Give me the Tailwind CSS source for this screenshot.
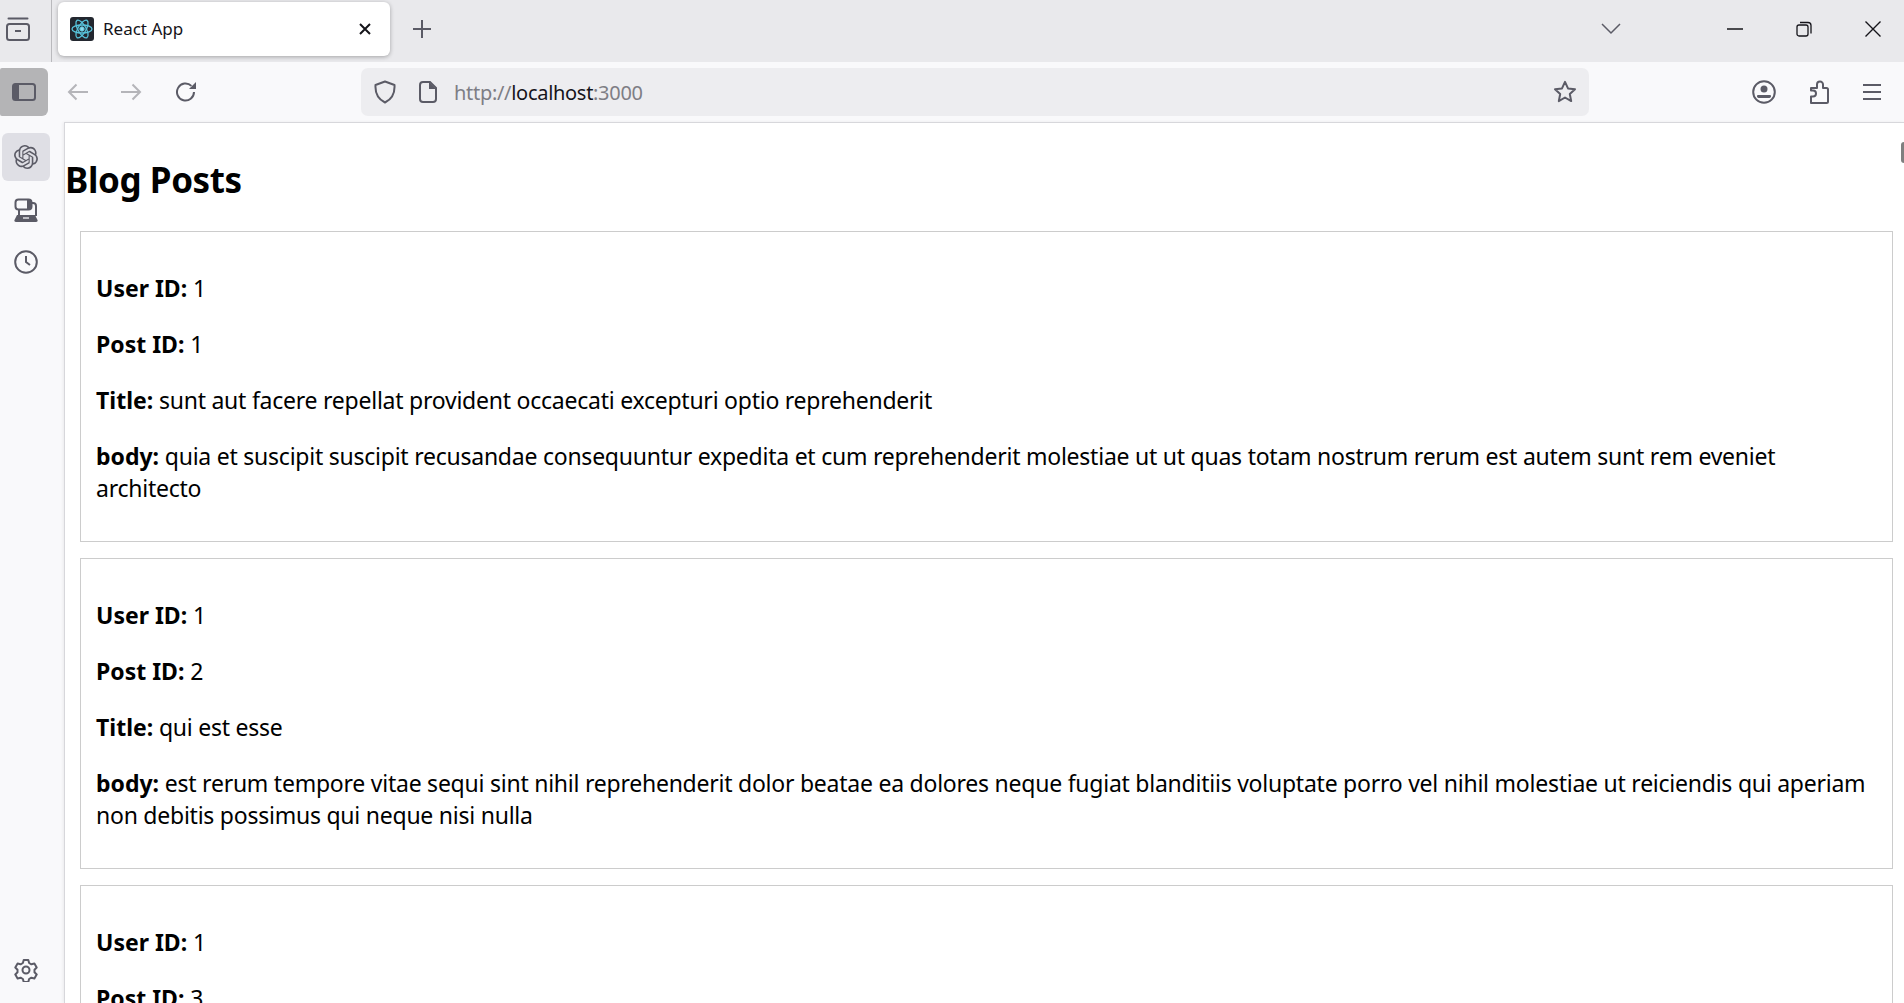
<!DOCTYPE html>
<html lang="en">
<head>
<meta charset="utf-8">
<title>React App</title>
<script src="https://cdn.jsdelivr.net/npm/@tailwindcss/browser@4"></script>
</head>
<body class="h-screen overflow-hidden bg-[#f9f9fb] font-['Noto_Sans','Open_Sans',sans-serif] text-black">
<div class="flex h-screen flex-col">
  <!-- tab strip -->
  <div class="flex h-[62px] shrink-0 bg-[#e9e9ec]">
    <div class="flex h-full w-[52px] items-center border-r border-[#b9b9bd] pb-[4px] pl-[6px]">
      <svg width="24" height="24" viewBox="0 0 24 24" fill="none" stroke="#5b5b66" stroke-width="2"><path d="M2.500 1.500h19" stroke-linecap="round"/><rect x="1" y="7" width="22" height="16" rx="2.500"/><path d="M9 14h6"/></svg>
    </div>
    <div class="flex h-full flex-1 items-center pb-[4px]">
      <div class="ml-[6px] flex h-[54px] w-[332px] items-center rounded-[6px] bg-white pl-[12px] pr-[18px] shadow-[0_1px_4px_rgba(0,0,0,0.3)]">
        <svg width="24" height="24" viewBox="0 0 24 24" fill="none" stroke="#58c4dc" stroke-width="1.300"><rect width="24" height="24" rx="3" fill="#23272f" stroke="none"/><circle cx="12" cy="12" r="2.200" fill="#8fdcec" stroke="#58c4dc" stroke-width="1"/><ellipse cx="12" cy="12" rx="10" ry="4"/><ellipse cx="12" cy="12" rx="10" ry="4" transform="rotate(60 12 12)"/><ellipse cx="12" cy="12" rx="10" ry="4" transform="rotate(120 12 12)"/></svg>
        <span class="ml-[9px] flex-1 text-[17px] text-[#15141a]">React App</span>
        <svg width="14" height="14" viewBox="0 0 14 14" fill="none" stroke="#15141a" stroke-width="2"><path d="M2 2l10 10M12 2L2 12"/></svg>
      </div>
      <div class="flex w-[64px] justify-center">
        <svg width="18" height="18" viewBox="0 0 18 18" fill="none" stroke="#5b5b66" stroke-width="2"><path d="M9 0v18M0 9h18"/></svg>
      </div>
      <div class="flex-1"></div>
      <svg class="mr-[106px]" width="20" height="12" viewBox="0 0 20 12" fill="none" stroke="#5b5b66" stroke-width="1.500"><path d="M1 1l9 9 9-9"/></svg>
      <svg class="mr-[53px]" width="16" height="2" viewBox="0 0 16 2"><path d="M0 1h16" stroke="#15141a" stroke-width="1.500"/></svg>
      <svg class="mr-[53px]" width="16" height="16" viewBox="0 0 16 16" fill="none" stroke="#15141a" stroke-width="1.300"><rect x="1" y="4" width="11" height="11" rx="2"/><path d="M4 1.500h8a3 3 0 0 1 3 3v8"/></svg>
      <svg class="mr-[23px]" width="16" height="16" viewBox="0 0 16 16" fill="none" stroke="#15141a" stroke-width="1.400"><path d="M0.500 0.500l15 15M15.500 0.500l-15 15"/></svg>
    </div>
  </div>
  <!-- toolbar -->
  <div class="flex h-[60px] shrink-0 items-center">
    <div class="flex h-[48px] w-[48px] items-center justify-center rounded-r-[6px] rounded-l-[2px] bg-[#b4b4b6]">
      <svg width="24" height="18" viewBox="0 0 24 18" fill="none"><rect x="1" y="1" width="22" height="16" rx="2.500" stroke="#5b5b66" stroke-width="2"/><path d="M2 2h5v14H2z" fill="#5b5b66"/></svg>
    </div>
    <div class="flex w-[54px] justify-center pl-[6px]">
      <svg width="22" height="18" viewBox="0 0 22 18" fill="none" stroke="#b5b5b9" stroke-width="2"><path d="M21 9H2M9.500 1.500L2 9l7.500 7.500"/></svg>
    </div>
    <div class="flex w-[58px] justify-center">
      <svg width="22" height="18" viewBox="0 0 22 18" fill="none" stroke="#b5b5b9" stroke-width="2"><path d="M1 9h19M12.500 1.500L20 9l-7.500 7.500"/></svg>
    </div>
    <div class="flex w-[52px] justify-center">
      <svg width="22" height="22" viewBox="0 0 22 22" fill="none"><path d="M19 11a8.500 8.500 0 1 1-2.600-6.100" stroke="#5b5b66" stroke-width="2"/><path d="M21 1v7h-7z" fill="#5b5b66"/></svg>
    </div>
    <div class="ml-[149px] flex h-[48px] w-[1228px] items-center rounded-[7px] bg-[#ededf0] pl-[13px] pr-[13px]">
      <svg width="22" height="24" viewBox="0 0 22 24" fill="none" stroke="#5b5b66" stroke-width="2"><path d="M11 1.500l9.500 3.500c.5 8-2.500 14-9.500 17.500C4 19 1 13 1.500 5z" stroke-linejoin="round"/></svg>
      <svg class="ml-[23px]" width="18" height="22" viewBox="0 0 18 22" fill="none"><path d="M11 1H4a3 3 0 0 0-3 3v14a3 3 0 0 0 3 3h10a3 3 0 0 0 3-3V7z" stroke="#5b5b66" stroke-width="2"/><path d="M10 1l7 7h-7z" fill="#5b5b66"/></svg>
      <div class="ml-[17px] flex-1 pt-[1px] text-[20px] tracking-[-0.3px] text-[#7e7e85]">http://<span class="text-[#15141a]">localhost</span>:3000</div>
      <svg class="translate-x-[1px]" width="24" height="24" viewBox="0 0 24 24" fill="none" stroke="#5b5b66" stroke-width="2" stroke-linejoin="round"><path d="M12 1.800l3 6.600 7 .8-5.200 4.800 1.400 7.100L12 17.500l-6.200 3.600 1.400-7.100L2 9.200l7-.8z"/></svg>
    </div>
    <div class="ml-[163px] flex">
      <svg width="24" height="24" viewBox="0 0 24 24"><circle cx="12" cy="12" r="10.800" fill="none" stroke="#5b5b66" stroke-width="2"/><circle cx="12" cy="9" r="3.500" fill="#5b5b66"/><path d="M5.500 15h13a2 2 0 0 1-1 3H6.500a2 2 0 0 1-1-3z" fill="#5b5b66"/></svg>
      <svg class="ml-[33px]" width="20" height="24" viewBox="0 0 20 24" fill="none" stroke="#5b5b66" stroke-width="2" stroke-linejoin="round"><path d="M8 8V4.500a3 3 0 0 1 6 0V8h3.500A1.500 1.500 0 0 1 19 9.500v12a1.500 1.500 0 0 1-1.500 1.500H2v-6.500h2a3 3 0 0 0 0-6H2V8z"/></svg>
      <svg class="ml-[34px]" width="18" height="24" viewBox="0 0 18 24" fill="none" stroke="#5b5b66" stroke-width="2"><path d="M0 5h18M0 12h18M0 19h18"/></svg>
    </div>
  </div>
  <!-- sidebar + page -->
  <div class="flex min-h-0 flex-1">
    <aside class="flex w-[64px] shrink-0 flex-col items-center pr-[12px] pt-[11px] pb-[21px]">
      <div class="flex h-[48px] w-[48px] items-center justify-center rounded-[6px] bg-[#dfdfe5]">
        <svg width="24" height="24" viewBox="0 0 24 24" fill="#5b5b66"><path d="M22.2819 9.8211a5.9847 5.9847 0 0 0-.5157-4.9108 6.0462 6.0462 0 0 0-6.5098-2.9A6.0651 6.0651 0 0 0 4.9807 4.1818a5.9847 5.9847 0 0 0-3.9977 2.9 6.0462 6.0462 0 0 0 .7427 7.0966 5.98 5.98 0 0 0 .511 4.9107 6.051 6.051 0 0 0 6.5146 2.9001A5.9847 5.9847 0 0 0 13.2599 24a6.0557 6.0557 0 0 0 5.7718-4.2058 5.9894 5.9894 0 0 0 3.9977-2.9001 6.0557 6.0557 0 0 0-.7475-7.0729zm-9.022 12.6081a4.4755 4.4755 0 0 1-2.8764-1.0408l.1419-.0804 4.7783-2.7582a.7948.7948 0 0 0 .3927-.6813v-6.7369l2.02 1.1686a.071.071 0 0 1 .038.052v5.5826a4.504 4.504 0 0 1-4.4945 4.4944zm-9.6607-4.1254a4.4708 4.4708 0 0 1-.5346-3.0137l.142.0852 4.783 2.7582a.7712.7712 0 0 0 .7806 0l5.8428-3.3685v2.3324a.0804.0804 0 0 1-.0332.0615L9.74 19.9502a4.4992 4.4992 0 0 1-6.1408-1.6464zM2.3408 7.8956a4.485 4.485 0 0 1 2.3655-1.9728V11.6a.7664.7664 0 0 0 .3879.6765l5.8144 3.3543-2.0201 1.1685a.0757.0757 0 0 1-.071 0l-4.8303-2.7865A4.504 4.504 0 0 1 2.3408 7.872zm16.5963 3.8558L13.1038 8.364 15.1192 7.2a.0757.0757 0 0 1 .071 0l4.8303 2.7913a4.4944 4.4944 0 0 1-.6765 8.1042v-5.6772a.79.79 0 0 0-.407-.667zm2.0107-3.0231l-.142-.0852-4.7735-2.7818a.7759.7759 0 0 0-.7854 0L9.409 9.2297V6.8974a.0662.0662 0 0 1 .0284-.0615l4.8303-2.7866a4.4992 4.4992 0 0 1 6.6802 4.66zM8.3065 12.863l-2.02-1.1638a.0804.0804 0 0 1-.038-.0567V6.0742a4.4992 4.4992 0 0 1 7.3757-3.4537l-.142.0805L8.704 5.459a.7948.7948 0 0 0-.3927.6813zm1.0976-2.3654l2.602-1.4998 2.6069 1.4998v2.9994l-2.5974 1.4997-2.6067-1.4997Z"/></svg>
      </div>
      <svg class="mt-[17px]" width="24" height="24" viewBox="0 0 24 24" fill="none"><rect x="1.500" y="1.500" width="16" height="10" rx="3" stroke="#5b5b66" stroke-width="2"/><path d="M13 2h3.500a1 1 0 0 1 1 1v7a1 1 0 0 1-1 1H13z" fill="#5b5b66"/><path d="M17.500 5h1.500a3 3 0 0 1 3 3v10M5 11.500V18" stroke="#5b5b66" stroke-width="2"/><path d="M3 17h18l2.500 5a1.500 1.500 0 0 1-1.300 2H1.800a1.500 1.500 0 0 1-1.300-2z" fill="#5b5b66"/><path d="M9 20h6" stroke="#dfdfe5" stroke-width="1.500"/></svg>
      <svg class="mt-[28px]" width="24" height="24" viewBox="0 0 24 24" fill="none" stroke="#5b5b66" stroke-width="2"><circle cx="12" cy="12" r="10.800"/><path d="M12 6v6l4 3"/></svg>
      <div class="flex-1"></div>
      <svg width="24" height="24" viewBox="0 0 24 24" fill="none" stroke="#5b5b66" stroke-width="2" stroke-linejoin="round"><circle cx="12" cy="12" r="3.500"/><path d="M9.700 2h4.600l.8 3 2.300 1.300 3-.8 2.300 4-2.200 2.200v2.600l2.200 2.200-2.300 4-3-.8-2.300 1.300-.8 3H9.700l-.8-3-2.300-1.300-3 .8-2.300-4 2.200-2.200v-2.600L1.300 9.500l2.300-4 3 .8 2.300-1.300z"/></svg>
    </aside>
    <main class="relative min-w-0 flex-1 overflow-hidden border-l border-t border-[#d7d7db] bg-white shadow-[-1px_0_3px_rgba(0,0,0,0.06)]">
      <div class="absolute right-0 top-[19px] h-[21px] w-[3px] rounded-l-sm bg-[#7f7f7f]"></div>
      <h1 class="mb-[27px] mt-[33px] text-[35px] font-bold leading-[48px] tracking-[-0.4px]">Blog Posts</h1>
      <div class="flex flex-col gap-[16px] pl-[15px] pr-[11px] text-[23px] leading-[32px] tracking-[-0.24px]">
        <article class="h-[311px] border border-[#cccccc] px-[15px] pt-[16px]">
          <p class="my-[24px]"><b class="tracking-[0px]">User ID:</b> 1</p>
          <p class="my-[24px]"><b class="tracking-[0px]">Post ID:</b> 1</p>
          <p class="my-[24px]"><b class="tracking-[0px]">Title:</b> sunt aut facere repellat provident occaecati excepturi optio reprehenderit</p>
          <p class="my-[24px]"><b class="tracking-[0px]">body:</b> quia et suscipit suscipit recusandae consequuntur expedita et cum reprehenderit molestiae ut ut quas totam nostrum rerum est autem sunt rem eveniet architecto</p>
        </article>
        <article class="h-[311px] border border-[#cccccc] px-[15px] pt-[16px]">
          <p class="my-[24px]"><b class="tracking-[0px]">User ID:</b> 1</p>
          <p class="my-[24px]"><b class="tracking-[0px]">Post ID:</b> 2</p>
          <p class="my-[24px]"><b class="tracking-[0px]">Title:</b> qui est esse</p>
          <p class="my-[24px]"><b class="tracking-[0px]">body:</b> est rerum tempore vitae sequi sint nihil reprehenderit dolor beatae ea dolores neque fugiat blanditiis voluptate porro vel nihil molestiae ut reiciendis qui aperiam non debitis possimus qui neque nisi nulla</p>
        </article>
        <article class="h-[311px] border border-[#cccccc] px-[15px] pt-[16px]">
          <p class="my-[24px]"><b class="tracking-[0px]">User ID:</b> 1</p>
          <p class="my-[24px]"><b class="tracking-[0px]">Post ID:</b> 3</p>
        </article>
      </div>
    </main>
  </div>
</div>
</body>
</html>
